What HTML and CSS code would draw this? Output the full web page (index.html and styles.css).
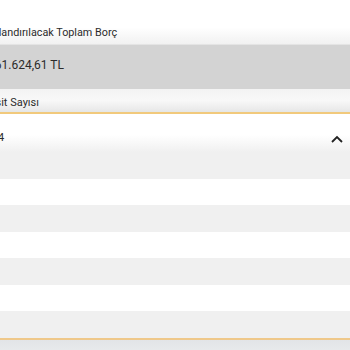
FILE: index.html
```html
<!DOCTYPE html>
<html lang="tr">
<head>
<meta charset="utf-8">
<link rel="stylesheet" href="styles.css">
</head>
<body>
<div class="page">
  <div class="field-label top-label"><span class="txt">Yapılandırılacak Toplam Borç</span></div>
  <div class="value-box"><span class="txt value">161.624,61 TL</span></div>
  <div class="field-label sub-label"><span class="txt">Taksit Sayısı</span></div>
  <div class="select">
    <div class="select-head">
      <span class="txt selected">4</span>
      <svg class="chev" width="12" height="8" viewBox="0 0 12 8"><path d="M1 7 L6 2 L11 7" fill="none" stroke="#222" stroke-width="1.8"/></svg>
    </div>
    <ul class="options">
      <li class="opt"><span class="txt">1</span></li>
      <li class="opt"><span class="txt">2</span></li>
      <li class="opt"><span class="txt">3</span></li>
      <li class="opt"><span class="txt">4</span></li>
      <li class="opt"><span class="txt">5</span></li>
      <li class="opt"><span class="txt">6</span></li>
      <li class="opt"><span class="txt">7</span></li>
    </ul>
  </div>
  <div class="footer"></div>
</div>
</body>
</html>
```

FILE: styles.css
```css
html, body {
  margin: 0;
  padding: 0;
  background: #ffffff;
  overflow: hidden;
}
body {
  width: 350px;
  height: 350px;
  font-family: Roboto, "Liberation Sans", sans-serif;
  color: #2b2b2b;
}
.page {
  display: flex;
  flex-direction: column;
  width: 350px;
}
.txt {
  margin-left: -22px;
  white-space: nowrap;
}
.field-label {
  display: flex;
  align-items: flex-end;
  font-size: 11px;
  line-height: 13px;
}
.top-label {
  height: 44px;
  padding-bottom: 5px;
  box-sizing: border-box;
  font-size: 10.8px;
  background: linear-gradient(to bottom, #ffffff 0%, #ffffff 62%, #f1f1f1 100%);
}
.value-box {
  height: 45px;
  box-sizing: border-box;
  border-top: 1px solid #e4e4e4;
  background: #d3d3d3;
  display: flex;
  align-items: center;
  font-size: 12px;
  padding-bottom: 4px;
}
.value {
  margin-left: -12px;
}
.sub-label {
  height: 23px;
  box-sizing: border-box;
  padding-bottom: 3px;
  background: linear-gradient(to bottom, #f3f3f3 0%, #f8f8f8 50%, #ececec 85%, #e4e6e6 100%);
}
.select {
  border-top: 2px solid #f1c97c;
  display: flex;
  flex-direction: column;
}
.select-head {
  height: 38px;
  display: flex;
  align-items: center;
  justify-content: space-between;
  padding-right: 7px;
  padding-top: 5px;
  box-sizing: border-box;
  font-size: 11px;
  background: linear-gradient(to bottom, #ffffff 0%, #ffffff 55%, #f0f0f0 100%);
}
.selected {
  margin-left: -2px;
  margin-top: 4px;
}
.chev {
  display: block;
  margin-top: 6px;
}
.options {
  list-style: none;
  margin: 0;
  padding: 0;
  font-size: 11px;
}
.opt {
  height: 26.57px;
  display: flex;
  align-items: center;
  background: #f0f0f0;
}
.opt:nth-child(even) {
  background: #ffffff;
}
.footer {
  border-top: 2px solid #efc88a;
  height: 20px;
  background: linear-gradient(to bottom, #e2e4e7 0%, #eceef0 100%);
}
```
